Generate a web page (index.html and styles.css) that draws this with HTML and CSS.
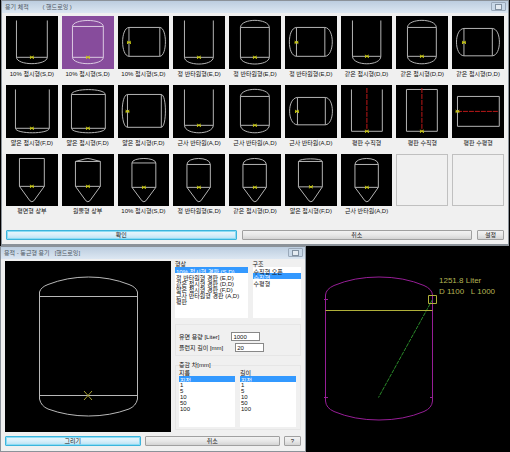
FILE: index.html
```html
<!DOCTYPE html>
<html lang="ko">
<head>
<meta charset="utf-8">
<title>용기 체적</title>
<link rel="stylesheet" href="styles.css">
</head>
<body>
<svg class="defs" aria-hidden="true">
  <symbol id="mark" viewBox="0 0 6 4"><path d="M1 .5l4 3M5 .5l-4 3M1 2h4" fill="none" stroke="#c8c814" stroke-width="1"/></symbol>
</svg>

<section class="window picker">
  <header class="titlebar"><h1>용기 체적 <span class="mode">( 핸드로잉 )</span></h1><button class="close" aria-label="닫기"></button></header>
  <div class="picker-body">
    <div class="tiles">
      <button class="tile"><svg viewBox="0 0 52 53"><path d="M10.5 4.5V41.5H41.5V4.5M10.5 41.5C11 50 41 50 41.5 41.5"/><use href="#mark" x="23" y="39.500" width="6" height="4"/></svg><span>10% 접시형(S,D)</span></button>
      <button class="tile selected"><svg viewBox="0 0 52 53"><path d="M10.5 10.500V41.5H41.5V10.500ZM10.5 41.5C11 50 41 50 41.5 41.5M10.5 10.500C11 2.500 41 2.500 41.5 10.500"/><use href="#mark" x="23" y="39.500" width="6" height="4"/></svg><span>10% 접시형(S,D)</span></button>
      <button class="tile"><svg viewBox="0 0 52 53"><path d="M11 11.5H42V40.5H11ZM11 11.5C2.500 12 2.500 40 11 40.500M42 11.500C49.500 12 49.500 40 42 40.500"/><use href="#mark" x="8" y="24.500" width="6" height="4"/></svg><span>10% 접시형(S,D)</span></button>
      <button class="tile"><svg viewBox="0 0 52 53"><path d="M11.5 4.5V41.5H40.500V4.5M11.5 41.5C12 50.500 40 50.500 40.500 41.5"/><use href="#mark" x="23" y="39.500" width="6" height="4"/></svg><span>정 반타원형(E,D)</span></button>
      <button class="tile"><svg viewBox="0 0 52 53"><path d="M11.5 11.5V41.5H40.500V11.5ZM11.5 41.5C12 50.500 40 50.500 40.500 41.5M11.5 11.5C12 2 40 2 40.500 11.5"/><use href="#mark" x="23" y="39.500" width="6" height="4"/></svg><span>정 반타원형(E,D)</span></button>
      <button class="tile"><svg viewBox="0 0 52 53"><path d="M11.500 11.5H40V40.5H11.500ZM11.500 11.5C2 12 2 40 11.500 40.500M40 11.500C50 12 50 40 40 40.500"/><use href="#mark" x="8.500" y="24.500" width="6" height="4"/></svg><span>정 반타원형(E,D)</span></button>
      <button class="tile"><svg viewBox="0 0 52 53"><path d="M11.5 4.5V40.5H40V4.5M11.5 40.5C12 50.500 40 50.500 40 40.5"/><use href="#mark" x="23" y="38.500" width="6" height="4"/></svg><span>같은 접시형(D,D)</span></button>
      <button class="tile"><svg viewBox="0 0 52 53"><path d="M11.5 11.5V40.5H40.5V11.5ZM11.5 40.5C12 50.500 40 50.500 40.500 40.5M11.5 11.5C12 2 40 2 40.500 11.5"/><use href="#mark" x="23" y="38.500" width="6" height="4"/></svg><span>같은 접시형(D,D)</span></button>
      <button class="tile"><svg viewBox="0 0 52 53"><path d="M12 12.5H40.5V40H12ZM12 12.5C2 13 2 39.500 12 40M40.5 12.5C50 13 50 39.500 40.500 40"/><use href="#mark" x="9" y="24.500" width="6" height="4"/></svg><span>같은 접시형(D,D)</span></button>

      <button class="tile"><svg viewBox="0 0 52 53"><path d="M9.5 4.5V43.500H43.500V4.5M9.5 43.500C10 49.500 43 49.500 43.500 43.500"/><use href="#mark" x="23" y="41.500" width="6" height="4"/></svg><span>얇은 접시형(F,D)</span></button>
      <button class="tile"><svg viewBox="0 0 52 53"><path d="M9.5 9.5V43.500H43.500V9.5ZM9.5 43.500C10 49.500 43 49.500 43.500 43.500M9.5 9.5C10 3 43 3 43.500 9.5"/><use href="#mark" x="23" y="41.500" width="6" height="4"/></svg><span>얇은 접시형(F,D)</span></button>
      <button class="tile"><svg viewBox="0 0 52 53"><path d="M9.5 9.5H43.500V42.5H9.5ZM9.5 9.5C2.500 10 2.500 42 9.5 42.5M43.5 9.5C49 10 49 42 43.500 42.5"/><use href="#mark" x="6.500" y="24.500" width="6" height="4"/></svg><span>얇은 접시형(F,D)</span></button>
      <button class="tile"><svg viewBox="0 0 52 53"><path d="M11.5 4.5V40.5H40.5V4.5M11.5 40.5C12 50.500 40 50.500 40.500 40.5"/><use href="#mark" x="23" y="38.500" width="6" height="4"/></svg><span>근사 반타원(A,D)</span></button>
      <button class="tile"><svg viewBox="0 0 52 53"><path d="M11.5 11.5V40.5H40.5V11.5ZM11.5 40.5C12 50.500 40 50.500 40.500 40.5M11.5 11.5C12 2 40 2 40.500 11.5"/><use href="#mark" x="23" y="38.500" width="6" height="4"/></svg><span>근사 반타원(A,D)</span></button>
      <button class="tile"><svg viewBox="0 0 52 53"><path d="M12.500 12.5H40.5V40H12.500ZM12.500 12.5C2 13 2 39.500 12.500 40M40.5 12.5C50 13 50 39.500 40.500 40"/><use href="#mark" x="9" y="24.500" width="6" height="4"/></svg><span>근사 반타원(A,D)</span></button>
      <button class="tile"><svg viewBox="0 0 52 53"><path d="M10.5 4.5V46.5H41.5V4.5"/><path class="axis" d="M26 3V46"/><use href="#mark" x="23" y="44.500" width="6" height="4"/></svg><span>평판 수직형</span></button>
      <button class="tile"><svg viewBox="0 0 52 53"><path d="M10.5 4.5H41.5V46.5H10.5Z"/><path class="axis" d="M26 3V46"/><use href="#mark" x="23" y="44.500" width="6" height="4"/></svg><span>평판 수직형</span></button>
      <button class="tile"><svg viewBox="0 0 52 53"><path d="M5.5 11.5H47.5V41.5H5.5Z"/><path class="axis" d="M5 26.500H47"/><use href="#mark" x="2.500" y="24.500" width="6" height="4"/></svg><span>평판 수평형</span></button>

      <button class="tile"><svg viewBox="0 0 52 53"><path d="M13.5 4.5H38.5V32.5H13.5ZM13.5 32.5L24 47Q26 49 28 47L38.500 32.5"/><use href="#mark" x="23" y="30.500" width="6" height="4"/></svg><span>평면형 상부</span></button>
      <button class="tile"><svg viewBox="0 0 52 53"><path d="M13.5 7.5H38.5V32.5H13.5ZM13.5 7.500L23 5Q26 4 29 5L38.500 7.500M13.5 32.5L24 47Q26 49 28 47L38.500 32.5"/><use href="#mark" x="23" y="30.500" width="6" height="4"/></svg><span>원뿔형 상부</span></button>
      <button class="tile"><svg viewBox="0 0 52 53"><path d="M14 9H38V33.5H14ZM14 9C14 3 38 3 38 9M14 33.5L24 47Q26 49 28 47L38 33.5"/><use href="#mark" x="23" y="31.500" width="6" height="4"/></svg><span>10% 접시형(S,D)</span></button>
      <button class="tile"><svg viewBox="0 0 52 53"><path d="M14 10.500H37.500V33.5H14ZM14 10.500C14 2.500 37.500 2.500 37.500 10.500M14 33.5L24 47Q26 49 28 47L37.500 33.5"/><use href="#mark" x="23" y="31.500" width="6" height="4"/></svg><span>정 반타원형(E,D)</span></button>
      <button class="tile"><svg viewBox="0 0 52 53"><path d="M14 10.500H37.500V33.5H14ZM14 10.500C14 2.500 37.500 2.500 37.500 10.500M14 33.5L24 47Q26 49 28 47L37.500 33.5"/><use href="#mark" x="23" y="31.500" width="6" height="4"/></svg><span>같은 접시형(D,D)</span></button>
      <button class="tile"><svg viewBox="0 0 52 53"><path d="M13.500 7.500H37.500V33H13.500ZM13.500 7.500C14 4 37.500 4 37.500 7.500M13.500 33L24 47Q26 49 28 47L37.500 33"/><use href="#mark" x="23" y="31" width="6" height="4"/></svg><span>얇은 접시형(F,D)</span></button>
      <button class="tile"><svg viewBox="0 0 52 53"><path d="M14 10.500H37.500V33.5H14ZM14 10.500C14 2.500 37.500 2.500 37.500 10.500M14 33.5L24 47Q26 49 28 47L37.500 33.5"/><use href="#mark" x="23" y="31.500" width="6" height="4"/></svg><span>근사 반타원(A,D)</span></button>
      <button class="tile empty" disabled aria-label="빈 칸"><i></i></button>
      <button class="tile empty" disabled aria-label="빈 칸"><i></i></button>
    </div>
    <footer class="actions">
      <button class="btn primary">확인</button>
      <button class="btn">취소</button>
      <button class="btn settings">설정</button>
    </footer>
  </div>
</section>

<div class="lower">
  <section class="window editor">
    <header class="titlebar"><h2>용적 - 둥근형 용기 &nbsp; [핸드로잉]</h2><button class="close" aria-label="닫기"></button></header>
    <div class="editor-body">
      <div class="columns">
        <svg class="preview" viewBox="0 0 166 171">
          <path d="M34.5 31V138M132.500 31V138M34.5 35.500H132.500M34.500 134.500H132.500M34.5 31Q36 26 43 23.500Q62 16 83.500 16T124 23.500Q131 26 132.500 31M34.5 138Q36 145 43 148Q62 155 83.500 155T124 148Q131 145 132.500 138"/>
          <path class="cross" d="M79 130l8 9M87 130l-8 9"/>
        </svg>
        <form class="options">
          <div class="lists shapes">
            <div><label for="shape">형상</label>
              <select id="shape" size="6"><option selected>10% 접시형 경판 (S,D)</option><option>정 반타원형 경판 (E,D)</option><option>같은 접시형 경판 (D,D)</option><option>얇은 접시형 경판 (F,D)</option><option>근사 반타원형 경판 (A,D)</option><option>평판</option></select></div>
            <div><label for="structure">구조</label>
              <select id="structure" size="3"><option>수직형 오픈</option><option selected>수직형</option><option>수평형</option></select></div>
          </div>
          <div class="group fields">
            <p><label for="volume">유면 용량 [Liter]</label><input id="volume" value="1000"></p>
            <p><label for="flange">플런지 길이 [mm]</label><input id="flange" value="20"></p>
          </div>
          <fieldset class="group">
            <legend>증감 차[mm]</legend>
            <div class="lists">
              <div><label for="diameter">지름</label>
                <select id="diameter" size="6"><option selected>직접</option><option>1</option><option>5</option><option>10</option><option>50</option><option>100</option></select></div>
              <div><label for="length">길이</label>
                <select id="length" size="6"><option selected>직접</option><option>1</option><option>5</option><option>10</option><option>50</option><option>100</option></select></div>
            </div>
          </fieldset>
        </form>
      </div>
      <footer class="actions">
        <button class="btn primary">그리기</button>
        <button class="btn">취소</button>
        <button class="btn help">?</button>
      </footer>
    </div>
  </section>

  <svg class="drawing" viewBox="0 0 204 206" preserveAspectRatio="xMinYMin meet">
    <path class="vessel" d="M19.500 49V155M126.500 49V155M19.500 49Q20 43 28 39.500Q48 31 73 31T118 39.500Q126 43 126.500 49M19.500 155Q20 162 28 165.500Q48 174 73 174T118 165.500Q126 162 126.500 155M18 53.500h4M18 151.500h4M124 151.500h3"/>
    <path class="leader" d="M126.500 53.500L72.500 151.500"/>
    <path class="level" d="M19.500 64.500H126.500M122.500 49.500h8v8h-8z"/>
    <text x="133" y="37">1251.8 Liter</text>
    <text x="133" y="48">D 1100 &nbsp; L 1000</text>
  </svg>
</div>
</body>
</html>
```
FILE: styles.css
```css
* { box-sizing: border-box; }

body {
  margin: 0;
  background: #000;
  color: #111;
  font: 6px/10px "Liberation Sans", "Noto Sans CJK KR", sans-serif;
}

h1, h2, p { margin: 0; font: inherit; }
button, input, select { font: inherit; color: inherit; margin: 0; border-radius: 0; }
.defs { display: none; }

.window {
  background: #f0f0f0;
  border: 1px solid #8b9299;
}

.titlebar {
  display: flex;
  justify-content: space-between;
  height: 12px;
  padding: 0 2px 0 3px;
  line-height: 12px;
  background: linear-gradient(#bccddf, #dce7f2);
  color: #4c5660;
}

.mode { margin-left: 12px; }

.close {
  width: 15px;
  height: 9px;
  margin-top: 1px;
  padding: 0;
  display: grid;
  place-items: center;
  background: #c8d8e8;
  border: 1px solid #9aa9ba;
  border-radius: 1px;
}
.close::before {
  content: "";
  width: 5px;
  height: 4px;
  border: 1px solid #8090a0;
  background: #e4ebf2;
}

.picker { margin: 0 1px; border-bottom-width: 2px; }
.picker-body { padding: 3px 4px 4px; }

.tiles {
  display: grid;
  grid-template-columns: repeat(9, minmax(0, 1fr));
  gap: 6px 4px;
}

.tile {
  display: flex;
  flex-direction: column;
  align-items: center;
  padding: 0;
  border: 0;
  background: none;
  white-space: nowrap;
  line-height: 10px;
}
.tile svg { display: block; width: 100%; background: #000; }
.tile path { fill: none; stroke: #b4b4b4; stroke-width: 1; }
.tile .axis { stroke: #c01818; stroke-dasharray: 5 1; }
.tile.selected svg { background: #874c9c; }
.tile.selected path { stroke: #dccbe2; }
.tile i {
  width: 100%;
  aspect-ratio: 52 / 53;
  border: 1px solid #c0c0c0;
}

.actions { display: flex; gap: 5px; }
.picker .actions { margin-top: 14px; }

.btn {
  flex: 1;
  height: 10px;
  padding: 0;
  line-height: 8px;
  border: 1px solid #a0a0a0;
  border-radius: 1px;
  background: linear-gradient(#f2f2f2, #e8e8e8 50%, #d4d4d4);
}
.btn.primary {
  border-color: #3db4dc;
  background: linear-gradient(#eaf7fd, #d8effa 50%, #b8e0f4);
  box-shadow: inset 0 0 0 1px #8cdcf4;
}
.btn.settings { flex: 0 0 27px; }
.btn.help { flex: 0 0 17px; }

.lower {
  display: grid;
  grid-template-columns: 3fr 2fr;
}

.editor-body { padding: 2px 4px 4px; }
.columns {
  display: grid;
  grid-template-columns: 166fr 126fr;
  gap: 4px;
}

.preview { display: block; width: 100%; background: #000; }
.preview path { fill: none; stroke: #b8b8b8; }
.preview .cross { stroke: #a8a034; }

.editor .actions { margin-top: 4px; gap: 4px; }

.options { line-height: 6px; }
.lists {
  display: grid;
  grid-template-columns: 1fr 1fr;
  gap: 5px;
}
.lists.shapes { grid-template-columns: 3fr 2fr; }
.lists label { display: block; }

select {
  display: block;
  width: 100%;
  height: 51px;
  padding: 0;
  border: 0;
  outline: 0;
  background: #fff;
  overflow: hidden;
  scrollbar-width: none;
}
option {
  height: 6px;
  min-height: 0;
  padding: 0 1px;
  line-height: 6px;
  overflow: visible;
}
option:checked {
  background-image: linear-gradient(#3399ff, #3399ff);
  -webkit-text-fill-color: #fff;
}

.group {
  margin: 6px 0 0;
  padding: 0 4px;
  border: 1px solid #e6e6e6;
}
.fields { padding: 6px 3px 2px; }
.fields p {
  display: flex;
  align-items: center;
  gap: 12px;
  height: 11px;
}
.fields input {
  width: 29px;
  height: 9px;
  padding: 0 1px;
  border: 1px solid #888;
  background: #fff;
}

fieldset.group { padding: 2px 4px 2px 3px; }
legend { padding: 0; }

.drawing { display: block; width: 100%; }
.drawing path { fill: none; stroke-width: 1; }
.drawing .vessel { stroke: #961e96; }
.drawing .level { stroke: #b0b03a; }
.drawing .leader { stroke: #2a8a2a; stroke-dasharray: 4 1; }
.drawing text { fill: #b4b454; font-size: 8px; }
```
